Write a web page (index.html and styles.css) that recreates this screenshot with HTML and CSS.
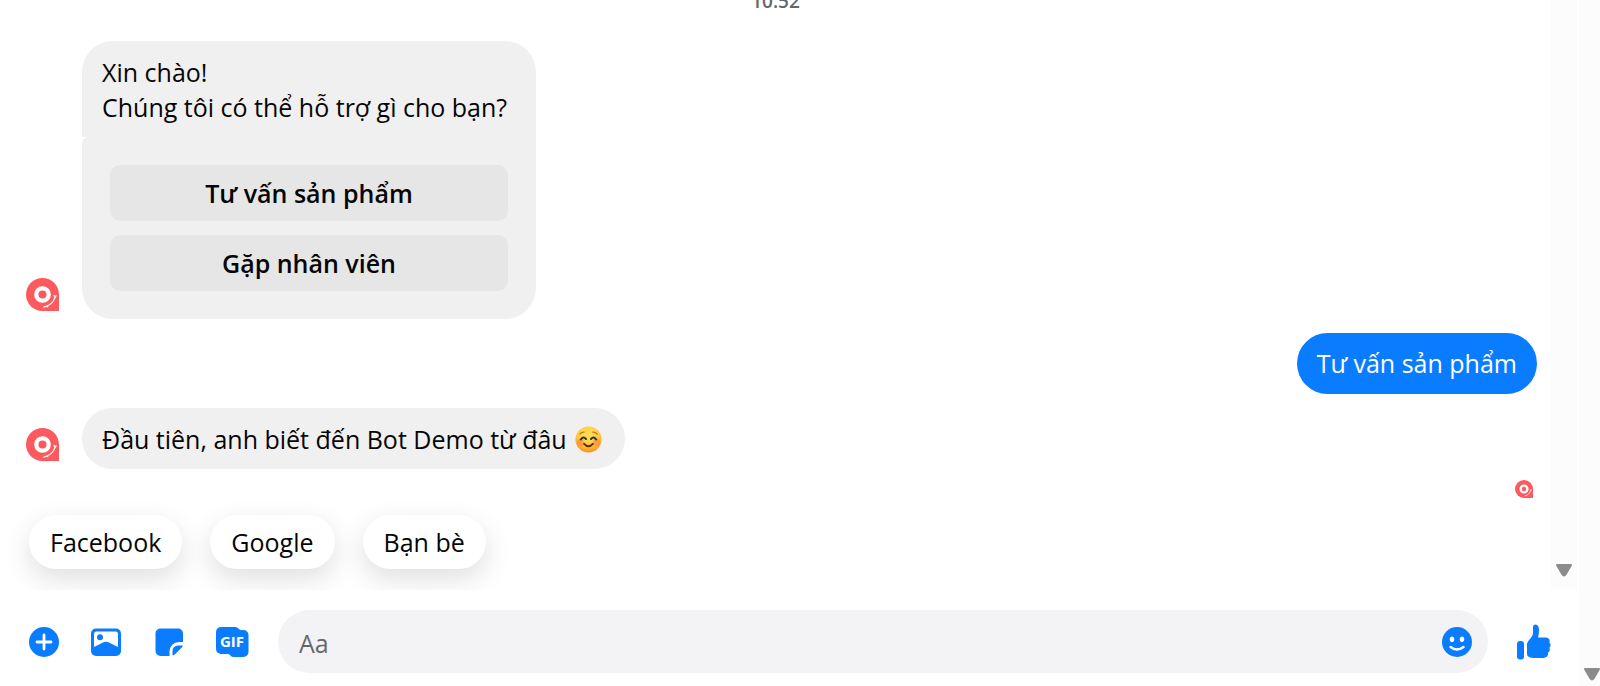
FILE: index.html
```html
<!DOCTYPE html>
<html lang="vi">
<head>
    <meta charset="UTF-8">
    <meta name="viewport" content="width=device-width, initial-scale=1.0">
    <title>Bot Demo</title>
    <link rel="stylesheet" href="styles.css">
</head>
<body>
    <!-- Shared bot avatar -->
    <svg class="defs" aria-hidden="true">
        <symbol id="bot-avatar" viewBox="0 0 34 34">
            <path d="M17 0a17 17 0 1 0 0 34h17V17A17 17 0 0 0 17 0z" fill="#fd5a60"/>
            <circle cx="17" cy="17" r="6.4" fill="none" stroke="#fff" stroke-width="4.4"/>
            <path d="M18 30.2l3-1.200 2 .8M21 29q7-2 9-9.500M30 20.500l-1.200-3M30 20.500l1.200-2.800" fill="none" stroke="#fff" stroke-width="1.300" opacity=".9"/>
        </symbol>
    </svg>

    <div class="page">
        <div class="chat">
            <div class="thread">
                <div class="messages">
                    <div class="timestamp">10:52</div>

                    <div class="message">
                        <svg class="avatar"><use href="#bot-avatar"/></svg>
                        <div class="card">
                            <p class="card-text">Xin chào!<br>Chúng tôi có thể hỗ trợ gì cho bạn?</p>
                            <div class="card-actions">
                                <button type="button" class="card-btn">Tư vấn sản phẩm</button>
                                <button type="button" class="card-btn">Gặp nhân viên</button>
                            </div>
                        </div>
                    </div>

                    <div class="message message-own">
                        <div class="bubble bubble-own">Tư vấn sản phẩm</div>
                    </div>

                    <div class="message">
                        <svg class="avatar"><use href="#bot-avatar"/></svg>
                        <div class="bubble">
                            <span>Đầu tiên, anh biết đến Bot Demo từ đâu</span>
                            <svg class="emoji" viewBox="0 0 28 28" role="img" aria-label="smile">
                                <defs>
                                    <radialGradient id="face" cx="50%" cy="30%" r="70%">
                                        <stop offset="0" stop-color="#ffe25a"/>
                                        <stop offset=".6" stop-color="#ffc93c"/>
                                        <stop offset="1" stop-color="#f9921e"/>
                                    </radialGradient>
                                </defs>
                                <circle cx="14" cy="14" r="13.500" fill="url(#face)"/>
                                <circle cx="5.500" cy="17" r="3.600" fill="#ff7a4d" opacity=".55"/>
                                <circle cx="22.500" cy="17" r="3.600" fill="#ff7a4d" opacity=".55"/>
                                <path d="M6 14q2.500-4 5.500-.5M16.500 13.500q3-3.500 5.500.5" fill="none" stroke="#2b3138" stroke-width="2" stroke-linecap="round"/>
                                <path d="M5 8.500q2-2.500 4.500-2.200M18.500 6.300q2.500-.3 4.500 2.200" fill="none" stroke="#c67a1c" stroke-width="1.300" stroke-linecap="round"/>
                                <path d="M9.500 18.500q4.500 5 9 0" fill="none" stroke="#5a2a18" stroke-width="2" stroke-linecap="round"/>
                            </svg>
                        </div>
                    </div>

                    <div class="seen">
                        <svg class="avatar-seen"><use href="#bot-avatar"/></svg>
                    </div>

                    <div class="quick-replies">
                        <button type="button" class="chip">Facebook</button>
                        <button type="button" class="chip">Google</button>
                        <button type="button" class="chip">Bạn bè</button>
                    </div>
                </div>
                <div class="scrollbar">
                    <svg class="arrow" viewBox="0 0 18 13"><path d="M2 1h14l-5.500 9.500q-1.500 2-3 0z" fill="#8b8b8b" stroke="#8b8b8b" stroke-width="2" stroke-linejoin="round"/></svg>
                </div>
            </div>

            <form class="composer">
                <div class="tools">
                    <button type="button" class="icon-btn" aria-label="Thêm">
                        <svg viewBox="0 0 34 34">
                            <circle cx="17" cy="17" r="15" fill="#0a7cff"/>
                            <path d="M17 10v14M10 17h14" stroke="#fff" stroke-width="2.800" stroke-linecap="round"/>
                        </svg>
                    </button>
                    <button type="button" class="icon-btn" aria-label="Ảnh">
                        <svg viewBox="0 0 34 34">
                            <rect x="1" y="3.500" width="30" height="27.500" rx="5" fill="#0a7cff"/>
                            <path d="M6.500 6.500h19a2.500 2.500 0 0 1 2.500 2.500v13l-9.500-4.700a6 6 0 0 0-5 0L4 22V9a2.500 2.500 0 0 1 2.500-2.500z" fill="#fff"/>
                            <circle cx="10" cy="12.200" r="3" fill="#0a7cff"/>
                        </svg>
                    </button>
                    <button type="button" class="icon-btn" aria-label="Nhãn dán">
                        <svg viewBox="0 0 34 34">
                            <path d="M7.500 3.500h17.500a5 5 0 0 1 5 5v8.500h-4a9.500 9.500 0 0 0-9.500 9.500v4.500H7.500a5 5 0 0 1-5-5V8.500a5 5 0 0 1 5-5z" fill="#0a7cff"/>
                            <path d="M19.500 30.500V26a5.500 5.500 0 0 1 5.500-5.500h4.700q-.2 1.200-1.200 2.200l-6.500 6.500q-1 1-2.500 1.300z" fill="#0a7cff"/>
                        </svg>
                    </button>
                    <button type="button" class="icon-btn" aria-label="Ảnh động">
                        <svg viewBox="0 0 34 34">
                            <path d="M5 2h14q2.300 0 3.700 1.800.9 1.200 2.300 1.200h2.500A5 5 0 0 1 32.500 10v17a5 5 0 0 1-5 5H18q-2.300 0-3.700-1.600-1-1.400-2.500-1.400H5a5 5 0 0 1-5-5V7a5 5 0 0 1 5-5z" fill="#0a7cff"/>
                            <text class="gif-label" x="16" y="22" text-anchor="middle">GIF</text>
                        </svg>
                    </button>
                </div>
                <div class="field">
                    <input type="text" class="field-input" placeholder="Aa" aria-label="Tin nhắn">
                    <button type="button" class="icon-btn" aria-label="Biểu tượng cảm xúc">
                        <svg viewBox="0 0 34 34">
                            <circle cx="17" cy="17" r="15" fill="#0a7cff"/>
                            <ellipse cx="12" cy="14.300" rx="2.200" ry="2.800" fill="#fff"/>
                            <ellipse cx="22" cy="14.300" rx="2.200" ry="2.800" fill="#fff"/>
                            <path d="M10.500 22q6.500 5 13 0" fill="none" stroke="#fff" stroke-width="2.400" stroke-linecap="round"/>
                        </svg>
                    </button>
                </div>
                <button type="button" class="icon-btn like-btn" aria-label="Thích">
                    <svg viewBox="0 0 36 36">
                        <rect x="1" y="17" width="7" height="18.500" rx="3" fill="#0a7cff"/>
                        <path d="M11 20.500q0-2 1.300-3.500l3.200-4q1.500-2 1.500-4.500V3q0-2.500 2.500-2.500 3.500 0 3.500 6 0 3.500-1 7h7.500q3.500.3 4 2.500.3 1.500-.2 2.500 1.700 1.200 1.200 3.300-.3 1.400-1.300 2 1 1.200.5 2.900-.5 1.500-1.900 2 .6 1.300-.1 2.700-1.500 2.600-6.700 2.600H18q-3 0-5-.9Q11 32.200 11 30z" fill="#0a7cff"/>
                    </svg>
                </button>
            </form>
        </div>
        <div class="scrollbar scrollbar-page">
            <svg class="arrow" viewBox="0 0 18 13"><path d="M2 1h14l-5.500 9.500q-1.500 2-3 0z" fill="#8b8b8b" stroke="#8b8b8b" stroke-width="2" stroke-linejoin="round"/></svg>
        </div>
    </div>
</body>
</html>
```

FILE: styles.css
```css
* {
    margin: 0;
    padding: 0;
    box-sizing: border-box;
}

body {
    font-family: 'Segoe UI', 'Open Sans', 'Noto Sans', sans-serif;
    font-size: 25px;
    line-height: 35px;
    color: #050505;
    background: #fff;
}

button, input {
    font: inherit;
    color: inherit;
    border: none;
    background: none;
}

button {
    cursor: pointer;
}

svg {
    display: block;
}

.defs {
    position: absolute;
    width: 0;
    height: 0;
}

.page {
    display: flex;
    height: 100vh;
    overflow: hidden;
}

.chat {
    flex: 1;
    min-width: 0;
    display: flex;
    flex-direction: column;
}

/* Thread */
.thread {
    flex: 1;
    min-height: 0;
    display: flex;
    margin-right: 2px;
    overflow: hidden;
}

.messages {
    flex: 1;
    display: flex;
    flex-direction: column;
    justify-content: flex-end;
    gap: 14px;
    padding: 0 14px 21px 26px;
}

.timestamp {
    margin-bottom: 14px;
    padding-right: 12px;
    text-align: center;
    font-size: 19px;
    line-height: 24px;
    font-weight: 600;
    color: #65676b;
}

.message {
    display: flex;
    align-items: flex-end;
    gap: 23px;
}

.message-own {
    justify-content: flex-end;
}

.avatar {
    width: 33px;
    height: 33px;
    margin-bottom: 8px;
}

.card {
    min-width: 454px;
}

.card-text {
    padding: 14px 20px 12px;
    background: #f0f0f0;
    border-radius: 31px 31px 0 0;
}

.card-actions {
    display: flex;
    flex-direction: column;
    gap: 14px;
    padding: 28px;
    background: #f0f0f0;
    border-radius: 6px 0 31px 31px;
}

.card-btn {
    height: 56px;
    background: #e6e6e6;
    border-radius: 10px;
    font-weight: 600;
}

.bubble {
    display: flex;
    align-items: center;
    gap: 8px;
    padding: 14px 23px 12px 20px;
    background: #f0f0f0;
    border-radius: 31px;
}

.bubble-own {
    padding: 13px 20px;
    background: #0a7cff;
    color: #fff;
}

.emoji {
    width: 27px;
    height: 27px;
}

.seen {
    display: flex;
    justify-content: flex-end;
    margin: -3px 0 3px;
    padding-right: 4px;
}

.avatar-seen {
    width: 18px;
    height: 18px;
}

/* Quick replies */
.quick-replies {
    display: flex;
    gap: 28px;
    padding-left: 3px;
}

.chip {
    height: 54px;
    padding: 0 21px;
    background: #fff;
    border-radius: 27px;
    box-shadow: 0 10px 28px rgba(0, 0, 0, 0.13);
}

/* Scrollbars */
.scrollbar {
    flex: none;
    display: flex;
    align-items: flex-end;
    width: 26px;
    padding: 0 4px 13px;
    background: #fcfcfc;
}

.scrollbar-page {
    width: 21px;
    padding-bottom: 5px;
}

.arrow {
    flex: none;
    width: 18px;
    height: 13px;
}

/* Composer */
.composer {
    flex: none;
    display: flex;
    align-items: center;
    gap: 28px;
    padding: 20px 27px 13px;
}

.tools {
    display: flex;
    gap: 29px;
}

.icon-btn {
    flex: none;
    width: 34px;
    height: 34px;
}

.gif-label {
    font-family: 'Open Sans', sans-serif;
    font-size: 15px;
    font-weight: 700;
    fill: #fff;
}

.field {
    flex: 1;
    display: flex;
    align-items: center;
    height: 63px;
    padding: 0 14px 0 21px;
    background: #f3f3f5;
    border-radius: 32px;
}

.field-input {
    flex: 1;
    min-width: 0;
    padding-top: 3px;
    outline: none;
}

.field-input::placeholder {
    color: #65676b;
    opacity: 1;
}

.like-btn {
    width: 36px;
    height: 36px;
}
```
